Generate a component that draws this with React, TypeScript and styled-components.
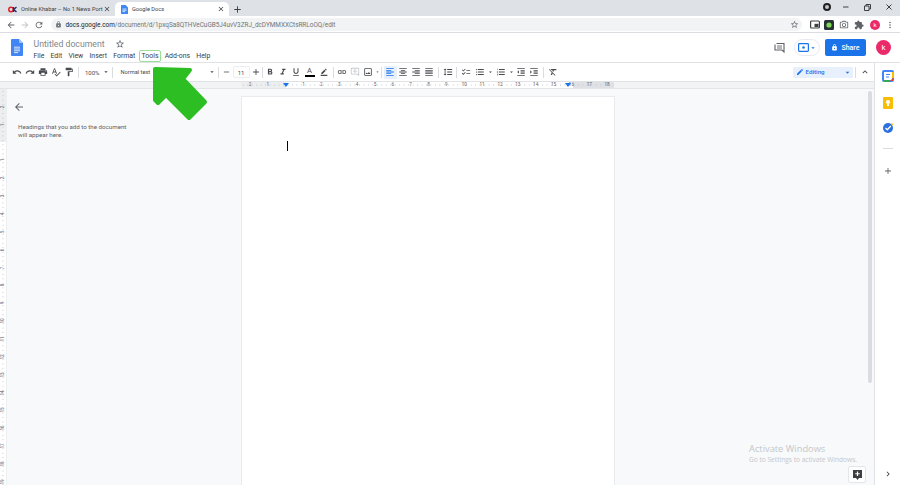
import React from 'react';
import styled, { createGlobalStyle } from 'styled-components';
import {
  MdAdd, MdArrowBack, MdArrowDropDown, MdArrowForward, MdBorderColor, MdChecklist, MdChevronRight, MdClose,
  MdEdit, MdExpandLess, MdExtension, MdFormatAlignCenter, MdFormatAlignJustify, MdFormatAlignLeft,
  MdFormatAlignRight, MdFormatBold, MdFormatClear, MdFormatIndentDecrease, MdFormatIndentIncrease,
  MdFormatItalic, MdFormatLineSpacing, MdFormatListBulleted, MdFormatListNumbered, MdFormatPaint,
  MdFormatUnderlined, MdLink, MdLock, MdMoreVert, MdOutlineAddComment, MdOutlineCameraAlt, MdOutlineImage,
  MdOutlineStarBorder, MdPrint, MdRedo, MdRefresh, MdRemove, MdSpellcheck, MdUndo,
} from 'react-icons/md';

const GlobalStyle = createGlobalStyle`
  html, body {
    margin: 0;
    height: 100%;
    overflow: hidden;
    font-family: Roboto, "Liberation Sans", sans-serif;
  }
  #root { height: 100%; }
`;

const Shell = styled.div`
  position: relative;
  display: flex;
  flex-direction: column;
  width: 900px;
  height: 485px;
  overflow: hidden;
  background: #fff;
`;

/* browser chrome */
const TabStrip = styled.div`
  display: flex;
  align-items: flex-end;
  flex: none;
  height: 16px;
  background: #dee1e6;
  color: #3c4043;
`;

const Tab = styled.div<{ $active?: boolean }>`
  display: flex;
  align-items: center;
  width: ${p => (p.$active ? 114 : 115)}px;
  height: 14px;
  padding: 0 4px 0 ${p => (p.$active ? 6 : 8)}px;
  box-sizing: border-box;
  border-radius: 5px 5px 0 0;
  background: ${p => (p.$active ? '#fff' : 'transparent')};
  font-size: 5.7px;
  white-space: nowrap;
`;

const TabTitle = styled.span`
  flex: 1;
  margin-left: 4px;
`;

const NewTab = styled.div`
  display: flex;
  align-items: center;
  margin: 0 0 1px 3px;
  font-size: 11px;
  color: #3c4043;
`;

const WindowControls = styled.div`
  display: flex;
  align-items: center;
  gap: 15px;
  margin-left: auto;
  padding: 0 8px 5px 0;
  color: #3c4043;
`;

const RecordDot = styled.span`
  width: 4px;
  height: 4px;
  margin-right: -2.5px;
  border: 2.5px solid #202124;
  border-radius: 50%;
  background: #c8c8c8;
`;

const OmniBar = styled.div`
  display: flex;
  align-items: center;
  flex: none;
  height: 17px;
  padding: 1px 0 0 4px;
  box-sizing: border-box;
  border-bottom: 1px solid #dadce0;
  color: #5f6368;
`;

const NavButton = styled.span<{ $faded?: boolean; $w?: number }>`
  display: flex;
  justify-content: center;
  width: ${p => p.$w ?? 14}px;
  font-size: 10px;
  color: ${p => (p.$faded ? '#bdc1c6' : '#5f6368')};
`;

const AddressPill = styled.div`
  display: flex;
  align-items: center;
  width: 751px;
  height: 13px;
  margin-left: 5px;
  padding: 0 3px 0 4px;
  box-sizing: border-box;
  border-radius: 7px;
  background: #f1f3f4;
  font-size: 6.4px;
  color: #70757a;
  white-space: nowrap;
`;

const Host = styled.span`
  margin-left: 3.5px;
  color: #202124;
`;

const PillStar = styled.span`
  display: flex;
  margin-left: auto;
  font-size: 9px;
  color: #5f6368;
`;

const Extensions = styled.div`
  display: flex;
  align-items: center;
  margin-left: 6px;
`;

const SmallAvatar = styled.span`
  display: flex;
  align-items: center;
  justify-content: center;
  width: 10px;
  height: 10px;
  margin: 0 3px 0 4px;
  border-radius: 50%;
  background: #ea2a6a;
  color: #fff;
  font-size: 6px;
`;

/* docs header */
const DocsHeader = styled.header`
  display: flex;
  align-items: center;
  flex: none;
  height: 30px;
  padding-left: 11px;
  box-sizing: border-box;
  border-bottom: 1px solid #e0e2e5;
`;

const TitleBlock = styled.div`
  display: flex;
  flex-direction: column;
  margin-left: 10.5px;
  padding-top: 3px;
`;

const TitleRow = styled.div`
  display: flex;
  align-items: center;
  height: 14px;
  color: #80868b;
  font-size: 8.7px;
`;

const TitleStar = styled.span`
  display: flex;
  margin-left: 10px;
  font-size: 10px;
  color: #5f6368;
`;

const MenuBar = styled.nav`
  display: flex;
  gap: 6.2px;
  height: 11px;
  align-items: center;
  font-size: 6.9px;
  color: #3c4043;
`;

const MenuItem = styled.span<{ $marked?: boolean }>`
  ${p => p.$marked && `
    padding: 1px 2px;
    border: 1px solid #9adf96;
    border-radius: 2px;
    margin-inline: -3px;
  `}
`;

const HeaderActions = styled.div`
  display: flex;
  align-items: center;
  margin-left: auto;
  padding-right: 9px;
`;

const CommentHistory = styled.span`
  display: flex;
  margin-right: 9px;
`;

const MeetButton = styled.span`
  display: flex;
  align-items: center;
  justify-content: center;
  width: 26px;
  height: 17px;
  box-sizing: border-box;
  border: 1px solid #e8eaed;
  border-radius: 9px;
  color: #1a73e8;
  font-size: 8px;
`;

const ShareButton = styled.span`
  display: flex;
  align-items: center;
  justify-content: center;
  gap: 3px;
  width: 41px;
  height: 17px;
  margin-left: 5px;
  border-radius: 2px;
  background: #1a73e8;
  color: #fff;
  font-size: 7px;
  font-weight: 500;
`;

const Avatar = styled.span`
  display: flex;
  align-items: center;
  justify-content: center;
  width: 15px;
  height: 15px;
  margin-left: 10px;
  border-radius: 50%;
  background: #ea2a6a;
  color: #fff;
  font-size: 8px;
`;

/* workspace */
const Workspace = styled.div`
  display: flex;
  flex: 1;
  min-height: 0;
`;

const Main = styled.main`
  display: flex;
  flex-direction: column;
  flex: 1;
  min-width: 0;
`;

const Toolbar = styled.div`
  display: flex;
  align-items: center;
  flex: none;
  height: 19px;
  padding: 0 2.5px 0 10.5px;
  box-sizing: border-box;
  border-bottom: 1px solid #e0e2e5;
  color: #474a4e;
`;

const Tool = styled.span<{ $w?: number; $active?: boolean; $muted?: boolean }>`
  display: flex;
  align-items: center;
  justify-content: center;
  flex: none;
  width: ${p => p.$w ?? 13}px;
  height: 13px;
  border-radius: 1px;
  font-size: 10px;
  background: ${p => (p.$active ? '#e8f0fe' : 'transparent')};
  color: ${p => (p.$active ? '#1a73e8' : p.$muted ? '#c4c7ca' : 'inherit')};
`;

const Caret = styled(Tool)`
  font-size: 8px;
`;

const Sep = styled.span<{ $m?: number }>`
  flex: none;
  width: 1px;
  height: 11px;
  margin: 0 ${p => p.$m ?? 2.5}px;
  background: #dadce0;
`;

const ZoomSelect = styled.span`
  display: flex;
  align-items: center;
  justify-content: space-between;
  width: 28px;
  padding-left: 3.5px;
  box-sizing: border-box;
  font-size: 6px;
`;

const StyleSelect = styled.span`
  display: flex;
  align-items: center;
  justify-content: space-between;
  width: 100px;
  padding: 0 0 0 5px;
  box-sizing: border-box;
  font-size: 5.7px;
`;

const SizeBox = styled.span`
  display: flex;
  align-items: center;
  justify-content: center;
  width: 17px;
  height: 12px;
  margin-left: 2px;
  box-sizing: border-box;
  border: 1px solid #eceef0;
  border-radius: 1px;
  font-size: 6px;
`;

const TextColor = styled.span`
  width: 10px;
  border-bottom: 2px solid #000;
  font-size: 7.5px;
  line-height: 8px;
  text-align: center;
`;

const ModeSelect = styled.span`
  display: flex;
  align-items: center;
  width: 60px;
  height: 11px;
  margin-left: auto;
  padding: 0 1px 0 3px;
  box-sizing: border-box;
  border-radius: 1px;
  background: #e8f0fe;
  color: #1a73e8;
  font-size: 6.2px;
  font-weight: 500;
`;

const ModeLabel = styled.span`
  flex: 1;
  margin-left: 2px;
`;

const Ruler = styled.div`
  position: relative;
  flex: none;
  height: 6px;
  padding-left: 241px;
  border-bottom: 1px solid #e3e5e8;
  background: #f1f3f4;
  overflow: hidden;
`;

const RulerTrack = styled.div`
  display: flex;
  width: 373px;
  height: 100%;
  background:
    radial-gradient(circle, #bdc1c6 0.4px, transparent 0.6px) 0 0 / 4.47px 100% repeat-x,
    linear-gradient(90deg, #eceef0 45px, #fff 45px, #fff 332px, #dfe1e5 332px);
`;

const RulerCell = styled.span`
  flex: none;
  width: 17.87px;
  font-size: 4.6px;
  line-height: 6px;
  text-align: center;
  color: #5f6368;
`;

const IndentMarker = styled.span<{ $left: number }>`
  position: absolute;
  top: 1px;
  left: ${p => p.$left}px;
  width: 0;
  height: 0;
  border: 3px solid transparent;
  border-bottom-width: 0;
  border-top: 4px solid #1a73e8;
`;

const DocArea = styled.div`
  display: flex;
  flex: 1;
  min-height: 0;
  background: #f8f9fa;
`;

const VerticalRuler = styled.div`
  display: flex;
  flex-direction: column;
  flex: none;
  width: 7px;
  padding-top: 8.8px;
  box-sizing: border-box;
  overflow: hidden;
  border-right: 1px solid #eceef0;
  background:
    radial-gradient(circle, #bdc1c6 0.4px, transparent 0.6px) 0 0 / 100% 4.47px repeat-y,
    linear-gradient(#eceef0 53px, #fff 53px);
`;

const VerticalCell = styled.span`
  flex: none;
  height: 17.87px;
  font-size: 4.6px;
  line-height: 17.87px;
  text-align: center;
  color: #5f6368;
  transform: rotate(-90deg);
`;

const Outline = styled.aside`
  flex: none;
  width: 235px;
  padding: 12px 0 0 11px;
  box-sizing: border-box;
  color: #5f6368;
`;

const BackIcon = styled.span`
  display: flex;
  margin-left: -5px;
  font-size: 12px;
`;

const OutlineHint = styled.p`
  margin: 10px 0 0;
  width: 112px;
  font-size: 6.2px;
  line-height: 8.3px;
`;

const Page = styled.section`
  flex: none;
  width: 372px;
  margin-top: 8px;
  padding: 44px 0 0 45px;
  box-sizing: border-box;
  background: #fff;
  box-shadow: 0 0 0 1px #e8eaed;
`;

const TextCursor = styled.span`
  display: block;
  width: 1px;
  height: 10px;
  background: #000;
`;

const Gutter = styled.div`
  display: flex;
  flex: 1;
  justify-content: flex-end;
  padding: 2px 2px 0 0;
`;

const ScrollThumb = styled.span`
  width: 4px;
  height: 292px;
  border-radius: 2px;
  background: #dadce0;
`;

const SidePanel = styled.aside`
  display: flex;
  flex-direction: column;
  align-items: center;
  flex: none;
  width: 26px;
  padding-top: 7px;
  box-sizing: border-box;
  border-left: 1px solid #e0e2e5;
  background: #fff;
`;

const PanelIcon = styled.span<{ $mt?: number }>`
  display: flex;
  margin-top: ${p => p.$mt ?? 0}px;
  color: #5f6368;
  font-size: 10px;
`;

const PanelRule = styled.span`
  width: 10px;
  height: 1px;
  margin-top: 14px;
  background: #dadce0;
`;

const Collapse = styled(PanelIcon)`
  margin-top: auto;
  margin-bottom: 6px;
  color: #3c4043;
`;

const Watermark = styled.div`
  position: absolute;
  left: 749px;
  top: 443px;
  color: #c4c7ca;
  font-family: "Open Sans", sans-serif;
  white-space: nowrap;
`;

const WatermarkTitle = styled.div`
  font-size: 9.3px;
  line-height: 12px;
`;

const WatermarkText = styled.div`
  font-size: 6.6px;
  line-height: 9px;
`;

const ExploreButton = styled.span`
  position: absolute;
  left: 848px;
  top: 466px;
  display: flex;
  align-items: center;
  justify-content: center;
  width: 18px;
  height: 17px;
  box-sizing: border-box;
  border: 1px solid #e4e6e8;
  border-radius: 2px;
  background: #fff;
`;

const PointerArrow = styled.svg`
  position: absolute;
  left: 148px;
  top: 62px;
`;

const Favicon = styled.svg`
  flex: none;
`;

const KhabarIcon = () => (
  <Favicon width="9" height="7" viewBox="0 0 9 7">
    <circle cx="3" cy="3.5" r="2.2" fill="none" stroke="#d8232a" strokeWidth="1.5" />
    <path d="M5.6 1v5M8.5 1 5.8 3.5 8.5 6" fill="none" stroke="#1c2f6b" strokeWidth="1.3" />
  </Favicon>
);

const DocFavicon = () => (
  <Favicon width="7" height="9" viewBox="0 0 7 9">
    <path d="M0.6 0h4L7 2.4v6a.6.6 0 0 1-.6.6H.6A.6.6 0 0 1 0 8.4V.6A.6.6 0 0 1 .6 0z" fill="#3f87f5" />
    <path d="M1.5 4h4M1.5 5.3h4M1.5 6.6h2.6" stroke="#fff" strokeWidth=".7" />
  </Favicon>
);

const DocsLogo = () => (
  <svg width="12" height="17" viewBox="0 0 12 17">
    <path d="M1 0h7l4 4v12a1 1 0 0 1-1 1H1a1 1 0 0 1-1-1V1a1 1 0 0 1 1-1z" fill="#4285f4" />
    <path d="M8 0l4 4H9a1 1 0 0 1-1-1z" fill="#a1c2fa" />
    <path d="M3 8.2h6M3 10h6M3 11.8h6M3 13.6h4" stroke="#f1f1f1" strokeWidth=".9" />
  </svg>
);

const MinimizeGlyph = () => (
  <svg width="6" height="6" viewBox="0 0 6 6"><path d="M0 3h5.5" stroke="#3c4043" /></svg>
);

const RestoreGlyph = () => (
  <svg width="7" height="7" viewBox="0 0 7 7" fill="none" stroke="#3c4043">
    <path d="M.5 2h4.500v4.500H.5zM2 2V.5h4.500V5H5" />
  </svg>
);

const CloseGlyph = () => (
  <svg width="6" height="6" viewBox="0 0 6 6"><path d="M.5.5l5 5M5.500.5l-5 5" stroke="#3c4043" /></svg>
);

const PipIcon = () => (
  <svg width="10" height="9" viewBox="0 0 10 9">
    <rect x=".6" y="1" width="8.800" height="7" rx="1" fill="none" stroke="#3c4043" strokeWidth="1.200" />
    <rect x="4.500" y="3.800" width="4" height="3.200" fill="#3c4043" />
  </svg>
);

const GreenExtension = () => (
  <svg width="10" height="10" viewBox="0 0 10 10">
    <rect width="10" height="10" rx="1.500" fill="#263238" />
    <circle cx="5" cy="5" r="2.600" fill="#7ed957" />
  </svg>
);

const CommentHistoryIcon = () => (
  <svg width="11" height="11" viewBox="0 0 11 11" fill="none" stroke="#5f6368">
    <path d="M1 2.500V8h7l2 2V1.500H2.500" strokeWidth="1.100" />
    <path d="M3 4h5M3 6h5" strokeWidth=".9" />
  </svg>
);

const MeetIcon = () => (
  <svg width="11" height="9" viewBox="0 0 11 9">
    <rect x=".6" y=".6" width="9.800" height="7.800" rx=".8" fill="none" stroke="#1a73e8" strokeWidth="1.200" />
    <circle cx="5.500" cy="4.500" r="1.300" fill="#1a73e8" />
  </svg>
);

const CalendarIcon = () => (
  <svg width="12" height="12" viewBox="0 0 12 12">
    <rect x="1" y="1" width="10" height="10" rx="1" fill="none" stroke="#4285f4" strokeWidth="2" />
    <path d="M11 8v3H8z" fill="#ea4335" />
    <path d="M2 11h6" stroke="#34a853" strokeWidth="2" />
    <path d="M11 2v6" stroke="#fbbc04" strokeWidth="2" />
    <path d="M4 4.500h4M4 7h3" stroke="#4285f4" strokeWidth="1" />
  </svg>
);

const KeepIcon = () => (
  <svg width="10" height="12" viewBox="0 0 10 12">
    <rect width="10" height="12" rx="1.200" fill="#fbbc04" />
    <circle cx="5" cy="5" r="2.100" fill="#fff" />
    <rect x="4" y="7" width="2" height="2" fill="#fff" />
  </svg>
);

const TasksIcon = () => (
  <svg width="12" height="12" viewBox="0 0 12 12">
    <circle cx="6" cy="6" r="5" fill="#2b6fe0" />
    <path d="M3.500 6l1.800 1.800L8.800 4" fill="none" stroke="#fff" strokeWidth="1.300" />
    <path d="M9.500 1.500 11 3" stroke="#fbbc04" strokeWidth="1.200" />
  </svg>
);

const ExploreIcon = () => (
  <svg width="9" height="10" viewBox="0 0 9 10">
    <path d="M0 0h9v8H6L4.500 10 3 8H0z" fill="#3c4043" />
    <path d="M4.500 1.500v4.500M2.250 3.750h4.500" stroke="#fff" strokeWidth="1.200" />
  </svg>
);

const hLabels: (number | null)[] = [2, 1, null, ...Array.from({ length: 18 }, (_, i) => i + 1)];
const vLabels: (number | null)[] = [2, 1, null, ...Array.from({ length: 19 }, (_, i) => i + 1)];
const menus = ['File', 'Edit', 'View', 'Insert', 'Format', 'Tools', 'Add-ons', 'Help'];

const App: React.FC = () => {
  return (
    <Shell>
      <GlobalStyle />
      <TabStrip>
        <Tab>
          <KhabarIcon />
          <TabTitle>Online Khabar – No 1 News Port</TabTitle>
          <MdClose size={8} />
        </Tab>
        <Tab $active>
          <DocFavicon />
          <TabTitle>Google Docs</TabTitle>
          <MdClose size={8} />
        </Tab>
        <NewTab><MdAdd /></NewTab>
        <WindowControls>
          <RecordDot />
          <MinimizeGlyph />
          <RestoreGlyph />
          <CloseGlyph />
        </WindowControls>
      </TabStrip>

      <OmniBar>
        <NavButton><MdArrowBack /></NavButton>
        <NavButton $faded><MdArrowForward /></NavButton>
        <NavButton><MdRefresh /></NavButton>
        <AddressPill>
          <MdLock size={7} />
          <Host>docs.google.com</Host>/document/d/1pxqSa8QTHVeCuGB5J4uvV3ZRJ_dcDYMMXXCtsRRLoOQ/edit
          <PillStar><MdOutlineStarBorder /></PillStar>
        </AddressPill>
        <Extensions>
          <NavButton><PipIcon /></NavButton>
          <NavButton><GreenExtension /></NavButton>
          <NavButton $w={16}><MdOutlineCameraAlt /></NavButton>
          <NavButton><MdExtension /></NavButton>
          <SmallAvatar>k</SmallAvatar>
          <NavButton><MdMoreVert /></NavButton>
        </Extensions>
      </OmniBar>

      <DocsHeader>
        <DocsLogo />
        <TitleBlock>
          <TitleRow>
            Untitled document
            <TitleStar><MdOutlineStarBorder /></TitleStar>
          </TitleRow>
          <MenuBar>
            {menus.map(m => (
              <MenuItem key={m} $marked={m === 'Tools'}>{m}</MenuItem>
            ))}
          </MenuBar>
        </TitleBlock>
        <HeaderActions>
          <CommentHistory><CommentHistoryIcon /></CommentHistory>
          <MeetButton><MeetIcon /><MdArrowDropDown /></MeetButton>
          <ShareButton><MdLock size={7} />Share</ShareButton>
          <Avatar>k</Avatar>
        </HeaderActions>
      </DocsHeader>

      <Workspace>
        <Main>
          <Toolbar>
            <Tool><MdUndo /></Tool>
            <Tool><MdRedo /></Tool>
            <Tool><MdPrint /></Tool>
            <Tool><MdSpellcheck /></Tool>
            <Tool><MdFormatPaint /></Tool>
            <Sep />
            <ZoomSelect>100%<MdArrowDropDown size={8} /></ZoomSelect>
            <Sep />
            <StyleSelect>Normal text<MdArrowDropDown size={8} /></StyleSelect>
            <Sep />
            <Tool $w={9}><MdRemove /></Tool>
            <SizeBox>11</SizeBox>
            <Tool $w={12}><MdAdd /></Tool>
            <Sep $m={0.5} />
            <Tool><MdFormatBold /></Tool>
            <Tool><MdFormatItalic /></Tool>
            <Tool><MdFormatUnderlined /></Tool>
            <Tool $w={14}><TextColor>A</TextColor></Tool>
            <Tool $w={14}><MdBorderColor size={8} /></Tool>
            <Sep $m={2} />
            <Tool><MdLink /></Tool>
            <Tool $muted><MdOutlineAddComment /></Tool>
            <Tool><MdOutlineImage /></Tool>
            <Caret $w={5}><MdArrowDropDown /></Caret>
            <Sep $m={1.5} />
            <Tool $active><MdFormatAlignLeft /></Tool>
            <Tool><MdFormatAlignCenter /></Tool>
            <Tool><MdFormatAlignRight /></Tool>
            <Tool><MdFormatAlignJustify /></Tool>
            <Sep />
            <Tool><MdFormatLineSpacing /></Tool>
            <Sep $m={1.5} />
            <Tool $w={14}><MdChecklist /></Tool>
            <Tool $w={14}><MdFormatListBulleted /></Tool>
            <Caret $w={7}><MdArrowDropDown /></Caret>
            <Tool $w={14}><MdFormatListNumbered /></Tool>
            <Caret $w={7}><MdArrowDropDown /></Caret>
            <Tool><MdFormatIndentDecrease /></Tool>
            <Tool><MdFormatIndentIncrease /></Tool>
            <Sep />
            <Tool><MdFormatClear /></Tool>
            <ModeSelect>
              <MdEdit size={8} />
              <ModeLabel>Editing</ModeLabel>
              <MdArrowDropDown size={9} />
            </ModeSelect>
            <Sep $m={2.500} />
            <Tool><MdExpandLess /></Tool>
          </Toolbar>

          <Ruler>
            <RulerTrack>
              {hLabels.map((n, i) => <RulerCell key={i}>{n}</RulerCell>)}
            </RulerTrack>
            <IndentMarker $left={283} />
            <IndentMarker $left={565} />
          </Ruler>

          <DocArea>
            <VerticalRuler>
              {vLabels.map((n, i) => <VerticalCell key={i}>{n}</VerticalCell>)}
            </VerticalRuler>
            <Outline>
              <BackIcon><MdArrowBack /></BackIcon>
              <OutlineHint>Headings that you add to the document will appear here.</OutlineHint>
            </Outline>
            <Page><TextCursor /></Page>
            <Gutter><ScrollThumb /></Gutter>
          </DocArea>
        </Main>

        <SidePanel>
          <PanelIcon><CalendarIcon /></PanelIcon>
          <PanelIcon $mt={15}><KeepIcon /></PanelIcon>
          <PanelIcon $mt={13}><TasksIcon /></PanelIcon>
          <PanelRule />
          <PanelIcon $mt={17}><MdAdd /></PanelIcon>
          <Collapse><MdChevronRight /></Collapse>
        </SidePanel>
      </Workspace>

      <PointerArrow width="64" height="64" viewBox="148 62 64 64">
        <path
          d="M155 69 190 70 183 79 205 102 189 118 166 95 158 103 155 100Z"
          fill="#2dbe24"
          stroke="#2dbe24"
          strokeWidth="4"
          strokeLinejoin="round"
        />
      </PointerArrow>

      <Watermark>
        <WatermarkTitle>Activate Windows</WatermarkTitle>
        <WatermarkText>Go to Settings to activate Windows.</WatermarkText>
      </Watermark>
      <ExploreButton><ExploreIcon /></ExploreButton>
    </Shell>
  );
};

export default App;
